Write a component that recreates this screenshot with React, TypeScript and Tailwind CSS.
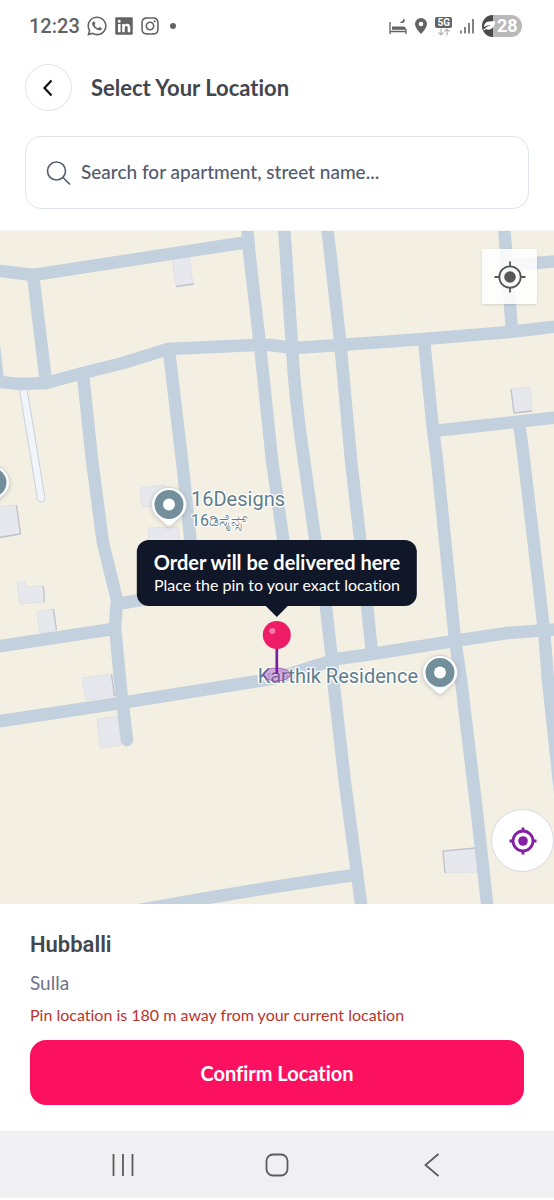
import type { ReactNode } from "react";
import { FaInstagram, FaLinkedin, FaWhatsapp } from "react-icons/fa6";

const ROADS = [
  "M0 271 L33 275 L248 242",
  "M247 225 L250 260 L260 345 L272 460 L284 545",
  "M284 225 L292 347 Q295 400 304 460 L315 538 L326 607 L332 660 L334 687 L345 783 L357 873 L362 912",
  "M327 225 L340 340 L351 460 L360 538 L372 653",
  "M-6 382 L0 382 L20 384 L46 383 L83 373 L123 363 L168 349 L255 345 L270 345 L294 348 L340 345 L424 339 L510 332 L560 326",
  "M33 275 L46 382",
  "M-8 330 L-2 382",
  "M83 375 L92 460 L103 543 L117 600 L115 627 L121 690 L127 740",
  "M169 351 L182 460 L191 545",
  "M117 604 L290 575",
  "M-6 647 L113 629",
  "M-6 722 L127 702 L277 678 L337 659 L372 654 L454 641 L507 633 L560 629",
  "M424 340 L433 430 L437 460 L455 640 L461 680 L477 813 L488 912",
  "M434 431 L560 417",
  "M519 422 L524 460 L544 630 L548 680 L561 800",
  "M504 225 L512 331",
  "M510 265 L560 261",
  "M140 910 Q260 888 355 875",
];

const BUILDINGS = [
  "172,258 189,256 193,284 176,286",
  "511,389 530,387 532,411 514,413",
  "-2,507 16,505 20,534 -2,537",
  "17,583 25,582 25,587 43,586 44,602 20,604",
  "37,612 53,609 56,630 40,633",
  "82,678 111,674 114,696 86,700",
  "97,719 117,716 121,745 100,748",
  "140,488 165,485 168,505 142,507",
  "148,528 178,527 180,545 149,545",
  "443,851 476,848 478,872 445,873",
];

// shaded walls on the side away from the light
const WALLS = [
  "M194 284 L176 286.500",
  "M511 389 L514 413 L532 411",
  "M16.500 505 L20.500 534 L0 537.500",
  "M43.500 586 L44.500 602",
  "M53.500 609 L56.500 630",
  "M111.500 674 L114.500 696",
  "M445 873 L443 851 L476 848",
];

function StreetMap() {
  return (
    <svg
      className="absolute inset-0 w-full h-full"
      viewBox="0 231 554 673"
      preserveAspectRatio="xMidYMid slice"
      aria-hidden="true"
    >
      <g fill="#e7e8ee" stroke="#dcdde4" strokeWidth="0.800">
        {BUILDINGS.map((points) => (
          <polygon key={points} points={points} />
        ))}
      </g>
      <g fill="none" stroke="#bfc1cc" strokeWidth="1.300">
        {WALLS.map((d) => (
          <path key={d} d={d} />
        ))}
      </g>
      <path d="M23 388 L35 460 L41 498" fill="none" stroke="#c9d1dc" strokeWidth="8.500" strokeLinecap="round" />
      <path d="M23 388 L35 460 L41 498" fill="none" stroke="#f1f4f8" strokeWidth="6.500" strokeLinecap="round" />
      <g fill="none" stroke="#c3d0dd" strokeWidth="12.500" strokeLinecap="round" strokeLinejoin="round">
        {ROADS.map((d) => (
          <path key={d} d={d} />
        ))}
      </g>
    </svg>
  );
}

function PlaceMarker() {
  return (
    <svg width="40" height="46" viewBox="0 0 40 46" className="shrink-0 drop-shadow-sm" aria-hidden="true">
      <path
        d="M20 2.500 C10.500 2.500 2.500 10 2.500 19.500 C2.500 25 5 29 9 32.500 L17 40 Q20 42.500 23 40 L31 32.500 C35 29 37.500 25 37.500 19.500 C37.500 10 29.500 2.500 20 2.500Z"
        fill="#fff"
        stroke="#c9cbcd"
        strokeWidth="0.700"
      />
      <circle cx="20" cy="19.500" r="14.500" fill="#728f9b" />
      <circle cx="20" cy="19.500" r="6" fill="#fff" />
    </svg>
  );
}

function DropPin() {
  return (
    <svg width="32" height="64" viewBox="0 0 32 64" aria-hidden="true">
      <ellipse cx="16" cy="54.500" rx="13.500" ry="6.500" fill="#9c27b0" fillOpacity="0.350" stroke="#8e44ad" strokeOpacity="0.700" />
      <path d="M16 28 V54" stroke="#7b1fa2" strokeWidth="2.700" />
      <circle cx="16" cy="15" r="14" fill="#ee1c64" />
      <circle cx="11.500" cy="11" r="3" fill="#f779a5" />
    </svg>
  );
}

function StatusBar() {
  return (
    <div className="flex items-center justify-between h-13 pl-[29px] pr-8 text-[#636363]">
      <div className="flex items-center gap-1.5">
        <span className="text-xl font-medium font-[Roboto,sans-serif]">12:23</span>
        <FaWhatsapp size={22} />
        <FaLinkedin size={20} />
        <FaInstagram size={20} />
        <span className="w-1.5 h-1.5 ml-1 rounded-full bg-[#636363]" />
      </div>
      <div className="flex items-center gap-2">
        <svg width="18" height="18" viewBox="0 0 18 18" fill="none" stroke="currentColor" strokeWidth="1.300">
          <path d="M1 5 V17 M1 14.500 H17 M17 17 V12" />
          <path d="M3 12.800 V9.500 H14 Q17 9.500 17 12.800Z" fill="currentColor" stroke="none" />
          <path d="M14.500 1 Q17 4 14.500 5.700 Q12.300 6.800 10.500 5 Q14.500 5 14.500 1Z" fill="currentColor" stroke="none" />
        </svg>
        <svg width="12" height="16" viewBox="0 0 12 16" fill="currentColor">
          <path
            fillRule="evenodd"
            d="M6 0 A6 6 0 0 0 0 6 C0 10 6 16 6 16 C6 16 12 10 12 6 A6 6 0 0 0 6 0Z M6 3.700 A2.300 2.300 0 1 1 6 8.300 A2.300 2.300 0 0 1 6 3.700Z"
          />
        </svg>
        <div className="flex flex-col items-center">
          <span className="px-0.5 rounded-xs bg-[#636363] text-white text-[10px] leading-[11px] font-bold font-[Roboto,sans-serif]">
            5G
          </span>
          <svg width="12" height="8" viewBox="0 0 12 8" fill="none" stroke="#b5b5b5" strokeWidth="1.200">
            <path d="M3 0.500 V7 M0.500 4.500 L3 7 L5.500 4.500 M9 7.500 V1 M6.500 3.500 L9 1 L11.500 3.500" />
          </svg>
        </div>
        <svg width="14" height="16" viewBox="0 0 14 16" stroke="currentColor" strokeWidth="1.600">
          <path d="M1 12.500 V15.500 M5 9 V15.500 M9 5 V15.500 M13 1 V15.500" />
        </svg>
        <div className="flex items-center w-10 h-[22px] rounded-full overflow-hidden bg-[#b9b9b9]">
          <svg width="13" height="22" viewBox="0 0 13 22" className="shrink-0">
            <path d="M0 0 H11 V22 H0Z" fill="#4a4a4a" />
            <path d="M2 12 Q2 7 7 6.500 L13 6 Q13 12 9 14 Q6 15.500 4 14 L2 15.500 L1 15 Q5 11 9 10 Q5 10 2 12Z" fill="#fff" />
          </svg>
          <span className="ml-0.5 text-lg font-bold text-white font-[Roboto,sans-serif]">28</span>
        </div>
      </div>
    </div>
  );
}

function PlaceLabel({ children }: { children: ReactNode }) {
  return (
    <div className="text-xl leading-6 text-[#607d8b] whitespace-nowrap font-[Roboto,'Noto_Sans',sans-serif] [text-shadow:-1px_-1px_1px_#fff,1px_-1px_1px_#fff,-1px_1px_1px_#fff,1px_1px_1px_#fff,0_0_2px_#fff,0_0_3px_#fff]">
      {children}
    </div>
  );
}

export default function App() {
  return (
    <div className="flex flex-col min-h-screen pb-0.5 bg-white font-[Lato,sans-serif] [font-variant-ligatures:none]">
      <StatusBar />

      <header className="px-[25px] pt-3 pb-[21px]">
        <div className="flex items-center gap-[19px]">
          <button
            aria-label="Back"
            className="flex items-center justify-center w-[47px] h-[47px] rounded-full border border-[#dde4ec]"
          >
            <svg width="12" height="18" viewBox="0 0 12 18" fill="none" stroke="#111" strokeWidth="2.200">
              <path d="M8.500 1.500 L1.500 9 L8.500 16.500" />
            </svg>
          </button>
          <h1 className="text-[22px] font-bold text-[#43474d]">Select Your Location</h1>
        </div>
        <label className="flex items-center gap-2.5 h-[73px] mt-[25px] px-5 rounded-2xl border border-[#dde4ec]">
          <svg width="25" height="26" viewBox="0 0 25 26" fill="none" stroke="#535b6d" strokeWidth="1.600" aria-hidden="true">
            <circle cx="10.500" cy="11" r="9" />
            <path d="M17 17.500 L24 24.500" />
          </svg>
          <input
            type="text"
            aria-label="Search location"
            placeholder="Search for apartment, street name..."
            className="flex-1 min-w-0 text-[19px] font-medium outline-none placeholder:text-[#535b6d]"
          />
        </label>
      </header>

      <main className="relative flex-1 min-h-[480px] overflow-hidden border-t border-[#f3f3f3] bg-[#f4efe3]">
        <StreetMap />

        <div className="absolute top-[232px] -left-7">
          <PlaceMarker />
        </div>
        <div className="absolute top-[254px] left-[149px] flex items-start gap-0.5">
          <PlaceMarker />
          <div className="pt-0.5">
            <PlaceLabel>
              <p>16Designs</p>
              <p className="text-base leading-5">16ಡಿಸೈನ್ಸ್</p>
            </PlaceLabel>
          </div>
        </div>
        <div className="absolute top-[422px] right-[94px] flex items-center gap-0.5">
          <PlaceLabel>Karthik Residence</PlaceLabel>
          <PlaceMarker />
        </div>

        <div className="absolute top-[309px] left-1/2 flex flex-col items-center -translate-x-1/2">
          <div className="px-[17px] py-2.5 rounded-xl bg-[#0f1728] text-white text-center whitespace-nowrap">
            <p className="text-xl leading-6 font-bold">Order will be delivered here</p>
            <p className="text-base leading-[22px]">Place the pin to your exact location</p>
          </div>
          <svg width="22" height="11" viewBox="0 0 22 11" aria-hidden="true">
            <path d="M0 0 H22 L11 11Z" fill="#0f1728" />
          </svg>
          <div className="mt-[3px]">
            <DropPin />
          </div>
        </div>

        <button
          aria-label="Center map"
          className="absolute top-[18px] right-[17px] flex items-center justify-center w-[55px] h-[55px] rounded-xs bg-white/85 shadow"
        >
          <svg width="32" height="32" viewBox="0 0 32 32" fill="none" stroke="#575757" strokeWidth="1.800">
            <circle cx="16" cy="16" r="10.700" />
            <circle cx="16" cy="16" r="5.800" fill="#575757" stroke="none" />
            <path d="M16 0.500 V5 M16 27 V31.500 M0.500 16 H5 M27 16 H31.500" />
          </svg>
        </button>
        <button
          aria-label="Use my current location"
          className="absolute right-0 bottom-8 flex items-center justify-center w-[63px] h-[63px] rounded-full bg-white border border-[#d5dae2]"
        >
          <svg width="28" height="28" viewBox="0 0 28 28" fill="none" stroke="#8420a3" strokeWidth="2.800">
            <circle cx="14" cy="14" r="10" />
            <circle cx="14" cy="14" r="4.800" fill="#8420a3" stroke="none" />
            <path d="M14 0.500 V4 M14 24 V27.500 M0.500 14 H4 M24 14 H27.500" />
          </svg>
        </button>
      </main>

      <section className="px-[30px] pt-[25px] pb-[26px]">
        <h2 className="text-[22px] leading-8 font-semibold text-[#43474d] font-[Roboto,sans-serif]">Hubballi</h2>
        <p className="mt-2.5 text-[19px] leading-6 text-[#6d7386]">Sulla</p>
        <p className="mt-2 text-base leading-6 text-[#b9342d]">Pin location is 180 m away from your current location</p>
        <button className="block w-full h-[65px] mt-[13px] rounded-2xl bg-[#fb115f] text-xl font-bold text-white">
          Confirm Location
        </button>
      </section>

      <nav className="grid grid-cols-[1fr_62px_1fr] items-center h-[67px] px-[92px] bg-[#f0f0f2] text-[#5b5b5b]">
        <button aria-label="Recent apps" className="flex justify-center w-[62px]">
          <svg width="22" height="24" viewBox="0 0 22 24" stroke="currentColor" strokeWidth="1.800">
            <path d="M1.500 1 V23 M11 1 V23 M20.500 1 V23" />
          </svg>
        </button>
        <button aria-label="Home" className="flex justify-center">
          <svg width="24" height="24" viewBox="0 0 24 24" fill="none" stroke="currentColor" strokeWidth="1.800">
            <rect x="1.500" y="1.500" width="21" height="21" rx="6.500" />
          </svg>
        </button>
        <button aria-label="Back" className="flex justify-center w-[62px] justify-self-end">
          <svg width="16" height="24" viewBox="0 0 16 24" fill="none" stroke="currentColor" strokeWidth="1.800">
            <path d="M15.500 1 L2.500 12 L15.500 23" />
          </svg>
        </button>
      </nav>
    </div>
  );
}
